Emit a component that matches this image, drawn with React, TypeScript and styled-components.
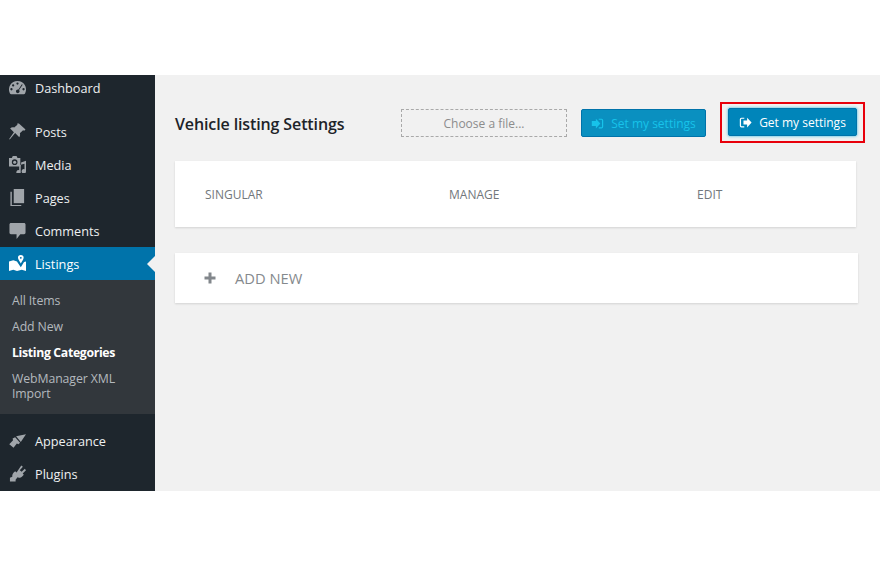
import React from "react";
import styled, { createGlobalStyle } from "styled-components";

const Global = createGlobalStyle`
  html, body { margin: 0; padding: 0; background: #fff; }
  body { font-family: "Open Sans", "Noto Sans", "Liberation Sans", sans-serif; }
`;

const Page = styled.div`
  width: 880px;
  height: 566px;
  padding-top: 75px;
  box-sizing: border-box;
  overflow: hidden;
`;
const Shell = styled.div`
  display: flex;
  height: 416px;
`;
const Sidebar = styled.nav`
  width: 155px;
  flex: none;
  background: #1e262d;
  display: flex;
  flex-direction: column;
`;
const MenuItem = styled.div<{ $active?: boolean; $gapTop?: number; $height?: number }>`
  position: relative;
  height: ${(p) => p.$height ?? 33}px;
  margin-top: ${(p) => p.$gapTop ?? 0}px;
  display: flex;
  align-items: center;
  padding-left: 9px;
  gap: 9px;
  background: ${(p) => (p.$active ? "#0073aa" : "transparent")};
  color: ${(p) => (p.$active ? "#fff" : "#eef0f1")};
  font-size: 12.7px;
  svg { flex: none; width: 17px; height: 17px; fill: ${(p) => (p.$active ? "#fff" : "#a0a5aa")}; }
`;
const Notch = styled.span`
  position: absolute;
  right: 0;
  top: 9px;
  border: 8px solid transparent;
  border-right-color: #f1f1f1;
  border-left-width: 0;
`;
const Submenu = styled.div`
  height: 134px;
  box-sizing: border-box;
  background: #32373c;
  padding: 7px 12px 0;
  display: flex;
  flex-direction: column;
  margin-bottom: 10px;
`;
const SubItem = styled.div<{ $current?: boolean }>`
  font-size: 12.3px;
  line-height: 15px;
  padding: 6px 0 5px;
  color: ${(p) => (p.$current ? "#fff" : "#b4b9be")};
  font-weight: ${(p) => (p.$current ? 700 : 400)};
  letter-spacing: ${(p) => (p.$current ? "-0.35px" : "-0.1px")};
`;
const Main = styled.main`
  flex: 1;
  background: #f1f1f1;
  padding: 27px 15px 0 20px;
  min-width: 0;
`;
const Header = styled.header`
  display: flex;
  align-items: center;
  height: 41px;
`;
const Title = styled.h1`
  margin: 2px 0 0;
  width: 226px;
  flex: none;
  font-size: 16px;
  font-weight: 600;
  letter-spacing: -0.12px;
  color: #1d2328;
`;
const FileBox = styled.div`
  width: 167px;
  height: 28px;
  box-sizing: border-box;
  border: 1px dashed #a9a9a9;
  display: flex;
  align-items: center;
  justify-content: center;
  padding-top: 2px;
  font-size: 12px;
  color: #8c8c8c;
  margin-right: 14px;
`;
const Button = styled.div<{ $dim?: boolean }>`
  height: 28px;
  box-sizing: border-box;
  display: flex;
  align-items: center;
  justify-content: center;
  gap: 7px;
  padding-top: 1px;
  background: ${(p) => (p.$dim ? "#0a90c0" : "#0085ba")};
  border: 1px solid #0073aa;
  border-radius: 2px;
  box-shadow: ${(p) => (p.$dim ? "none" : "0 0 3px #22b6e0")};
  color: ${(p) => (p.$dim ? "#17c3ea" : "#fff")};
  font-size: 12px;
  svg { width: 13px; height: 13px; fill: currentColor; }
`;
const SetButton = styled(Button)`
  width: 125px;
  flex: none;
`;
const Highlight = styled.div`
  margin-left: 14px;
  width: 145px;
  height: 41px;
  flex: none;
  box-sizing: border-box;
  border: 2px solid #e8000b;
  padding: 4px 6px;
`;
const GetButton = styled(Button)`
  width: 129px;
`;
const Card = styled.section`
  background: #fff;
  box-shadow: 0 1px 2px rgba(0, 0, 0, 0.13);
`;
const TableCard = styled(Card)`
  margin-top: 18px;
  width: 681px;
  height: 66px;
  box-sizing: border-box;
  padding-left: 30px;
  display: grid;
  grid-template-columns: 244px 248px 1fr;
  align-items: center;
`;
const Col = styled.div`
  font-size: 12px;
  color: #72777c;
`;
const AddCard = styled(Card)`
  margin-top: 26px;
  width: 683px;
  height: 50px;
  box-sizing: border-box;
  padding-left: 29px;
  display: flex;
  align-items: center;
  gap: 19px;
  color: #85898d;
  font-size: 14.7px;
  font-weight: 500;
  svg { width: 12px; height: 12px; fill: #82878c; }
`;

const Dashboard = () => (
  <svg viewBox="1 1 18 18"><path fillRule="evenodd" d="M10 2a9 9 0 0 0-8 13.2c.3.6.8.8 1.3.8h13.4c.5 0 1-.2 1.3-.8A9 9 0 0 0 10 2zM10 3.600a1.200 1.200 0 1 1 0 2.400 1.200 1.200 0 0 1 0-2.400zM5.400 5.600a1.200 1.200 0 1 1 0 2.400 1.200 1.200 0 0 1 0-2.400zM3.600 9.600a1.200 1.200 0 1 1 0 2.400 1.200 1.200 0 0 1 0-2.400zM16.400 9.600a1.200 1.200 0 1 1 0 2.400 1.200 1.200 0 0 1 0-2.400zM14.600 5.400l.9.7-3.900 5.600a1.900 1.900 0 1 1-3.200 1.200c0-1 .9-1.900 1.900-1.900.3 0 .5 0 .7.1z" /></svg>
);
const Pin = () => (
  <svg viewBox="1 1 18 18"><path d="M11.500 1.500l7 6.500-1.400 1.200-1.200-.6-3.400 3.200c.5 1.600.2 3-.6 4.200L7.500 11.500 1.800 18.500l-.6-.5 5-7.200L2.200 6.800C3.400 5.600 5 5.300 6.500 5.800l3.400-3-.2-1.300z" /></svg>
);
const MediaIcon = () => (
  <svg viewBox="1 1 18 18"><path fillRule="evenodd" d="M1 3h3l1-2h4l1 2h3v9H1zM7 4.500a3 3 0 1 0 0 6 3 3 0 0 0 0-6z" /><circle cx="7" cy="7.500" r="1.600" /><path d="M19 6v11.200a2.300 2.300 0 1 1-1.600-2.200V9.200l-4 1v8a2.300 2.300 0 1 1-1.600-2.200v-5.400h2V7.800z" /></svg>
);
const PagesIcon = () => (
  <svg viewBox="1 1 18 18"><path d="M6 1h11v15H6z" /><path d="M4 4v14h10v1.500H2.500V4z" /></svg>
);
const CommentIcon = () => (
  <svg viewBox="1 1 18 18"><path d="M3 2h14c.8 0 1.500.7 1.500 1.500v9c0 .8-.7 1.500-1.500 1.500h-4l-4 5v-5H3c-.8 0-1.500-.7-1.500-1.500v-9C1.500 2.700 2.200 2 3 2z" /></svg>
);
const ListingIcon = () => (
  <svg viewBox="1 1 18 18"><path fillRule="evenodd" d="M13.500 1a3 3 0 0 1 3 3c0 1.800-2 4-3 6-1-2-3-4.200-3-6a3 3 0 0 1 3-3zm0 2a1 1 0 1 0 0 2 1 1 0 0 0 0-2z" /><path d="M1 8l4.500-1.500 4 1.500.6 1 3.400 5 3.400-5.500L19 8v10l-4.500-1.500-5 1.500-4-1.500L1 18z" /></svg>
);
const Brush = () => (
  <svg viewBox="1 1 18 18"><path d="M8.500 5.500L19 3.500l-5.500 8.200zM7.500 6.500l5.200 6-1.700 1.500-1.700-.8-3.500 4.500-4.500-3.700 4-4.200-.5-1.800z" /></svg>
);
const Plug = () => (
  <svg viewBox="1 1 18 18"><path d="M14 1.500l1.700 1.300-3.300 3.700 2 1.700 3.300-3.200L19 6.500l-3.500 3.500 1.200 1.300-1.500 1.500c-1.600 1.500-3.500 2-5.200 1.300L8 16.500v2H2v-4l2.500-1c-.2-1.700.3-3.300 1.500-4.500L7.500 7.500 9 9z" /></svg>
);
const SignIn = () => (
  <svg viewBox="0 0 16 16"><path d="M1 5h5V2l5.500 6L6 14v-3H1z" /><path d="M9.500 2H13a2 2 0 0 1 2 2v8a2 2 0 0 1-2 2H9.500v-1.500H13a.5.500 0 0 0 .5-.5V4a.5.500 0 0 0-.5-.5H9.500z" /></svg>
);
const SignOut = () => (
  <svg viewBox="0 0 16 16"><path d="M6.500 2H3a2 2 0 0 0-2 2v8a2 2 0 0 0 2 2h3.500v-1.500H3a.5.500 0 0 1-.5-.5V4a.5.500 0 0 1 .5-.5h3.500z" /><path d="M5.500 5.500h4.500V2l5.500 6-5.500 6v-3.500H5.500z" /></svg>
);
const Plus = () => (
  <svg viewBox="0 0 12 12"><path d="M4.500 0.500h3v4h4v3h-4v4h-3v-4h-4v-3h4z" /></svg>
);

export default function App() {
  return (
    <Page>
      <Global />
      <Shell>
        <Sidebar>
          <MenuItem $height={26}><Dashboard />Dashboard</MenuItem>
          <MenuItem $gapTop={14}><Pin />Posts</MenuItem>
          <MenuItem><MediaIcon />Media</MenuItem>
          <MenuItem><PagesIcon />Pages</MenuItem>
          <MenuItem><CommentIcon />Comments</MenuItem>
          <MenuItem $active><ListingIcon />Listings<Notch /></MenuItem>
          <Submenu>
            <SubItem>All Items</SubItem>
            <SubItem>Add New</SubItem>
            <SubItem $current>Listing Categories</SubItem>
            <SubItem>WebManager XML Import</SubItem>
          </Submenu>
          <MenuItem><Brush />Appearance</MenuItem>
          <MenuItem><Plug />Plugins</MenuItem>
        </Sidebar>
        <Main>
          <Header>
            <Title>Vehicle listing Settings</Title>
            <FileBox>Choose a file...</FileBox>
            <SetButton $dim><SignIn />Set my settings</SetButton>
            <Highlight>
              <GetButton><SignOut />Get my settings</GetButton>
            </Highlight>
          </Header>
          <TableCard>
            <Col>SINGULAR</Col>
            <Col>MANAGE</Col>
            <Col>EDIT</Col>
          </TableCard>
          <AddCard><Plus />ADD NEW</AddCard>
        </Main>
      </Shell>
    </Page>
  );
}
